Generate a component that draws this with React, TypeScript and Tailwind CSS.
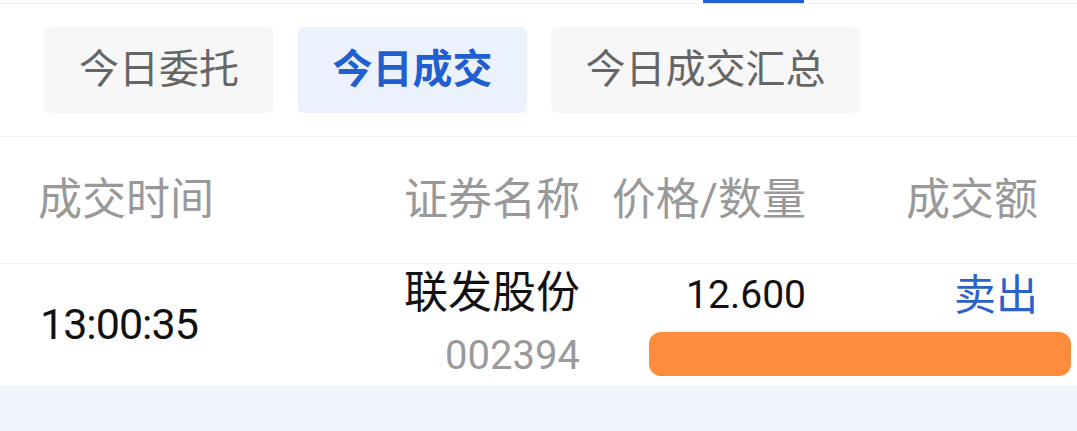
export default function App() {
  const tabs = [
    { label: '今日委托', w: 'w-[230px]', active: false },
    { label: '今日成交', w: 'w-[229px]', active: true },
    { label: '今日成交汇总', w: 'w-[309px]', active: false },
  ];

  return (
    <div className="w-[1077px] h-[431px] overflow-hidden bg-[#f2f6fc] font-['Roboto','Noto_Sans_CJK_SC',sans-serif]">
      {/* ======= Top indicator ======= */}
      <div className="h-[4px] bg-white border-b border-[#eeeeee]">
        <div className="ml-[703px] w-[101px] h-[3px] bg-[#1f5fd6]" />
      </div>

      {/* ======= Tabs ======= */}
      <div className="bg-white flex gap-[24px] px-[44px] pt-[23px] pb-[23px] border-b border-[#f0f0f0]">
        {tabs.map((t) => (
          <div
            key={t.label}
            className={`${t.w} h-[86px] rounded-[6px] flex items-center justify-center text-[40px] ${
              t.active ? 'bg-[#ecf2fd] text-[#1f5fd0] font-bold' : 'bg-[#f7f7f7] text-[#666666]'
            }`}
          >
            {t.label}
          </div>
        ))}
      </div>

      {/* ======= Header ======= */}
      <div className="bg-white h-[127px] grid grid-cols-[342px_200px_226px_1fr] items-center pl-[38px] pr-[39px] border-b border-[#f0f0f0] text-[44px] text-[#999999]">
        <div>成交时间</div>
        <div className="text-right">证券名称</div>
        <div className="text-right">价格/数量</div>
        <div className="text-right">成交额</div>
      </div>

      {/* ======= Row ======= */}
      <div className="relative bg-white h-[121px] grid grid-cols-[342px_200px_226px_1fr] items-center pl-[38px] pr-[39px] text-[#111111]">
        <div className="pl-[2px] text-[43px] tracking-[-1px]">13:00:35</div>
        <div className="flex flex-col items-end leading-[59px]">
          <span className="text-[44px]">联发股份</span>
          <span className="text-[40px] text-[#9a9a9a] pt-[3px]">002394</span>
        </div>
        <div className="flex flex-col items-end leading-[59px]">
          <span className="text-[39px]">12.600</span>
          <span className="h-[59px]" />
        </div>
        <div className="flex flex-col items-end leading-[59px]">
          <span className="text-[42px] text-[#2a62c9]">卖出</span>
          <span className="h-[59px]" />
        </div>
        {/* redacted quantity / amount */}
        <div className="absolute left-[649px] top-[68px] w-[422px] h-[44px] rounded-[12px] bg-[#fd8c3c]" />
      </div>
    </div>
  );
}
